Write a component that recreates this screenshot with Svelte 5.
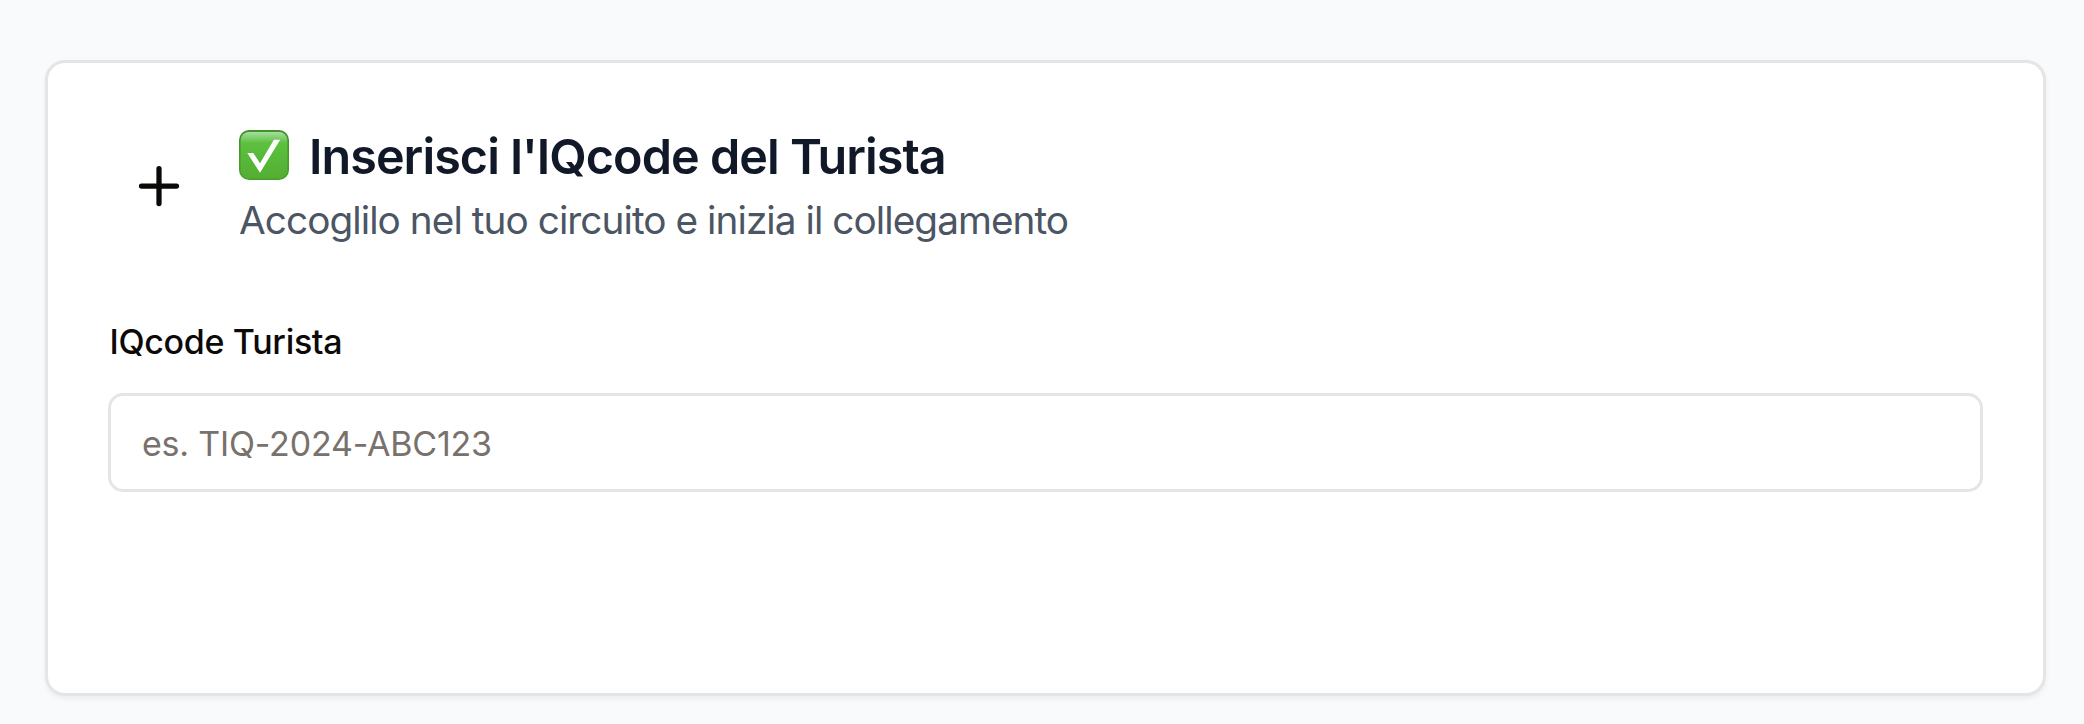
<script>
  let code = $state('');
</script>

<main class="page">
  <section class="card">
    <header class="header">
      <div class="icon">
        <svg viewBox="0 0 24 24" width="60" height="60" fill="none" stroke="currentColor" stroke-width="2.1" stroke-linecap="round" stroke-linejoin="round" aria-hidden="true">
          <path d="M5 12h14" />
          <path d="M12 5v14" />
        </svg>
      </div>
      <div class="heading">
        <h2 class="title">
          <svg class="check" viewBox="0 0 50 50" width="50" height="50" aria-hidden="true">
            <defs>
              <linearGradient id="face" x1="0" y1="0" x2="0" y2="1">
                <stop offset="0" stop-color="#a5dfa0" />
                <stop offset="0.1" stop-color="#87d177" />
                <stop offset="0.24" stop-color="#5cc03e" />
                <stop offset="1" stop-color="#54ae32" />
              </linearGradient>
              <linearGradient id="rim" x1="0" y1="0" x2="0" y2="1">
                <stop offset="0" stop-color="#43922c" />
                <stop offset="1" stop-color="#4a9e2d" />
              </linearGradient>
              <filter id="soft" x="-5%" y="-5%" width="110%" height="110%">
                <feGaussianBlur stdDeviation="0.7" />
              </filter>
            </defs>
            <rect width="50" height="50" rx="10" fill="url(#rim)" />
            <rect x="1.6" y="2" width="46.8" height="46.6" rx="8.4" fill="url(#face)" filter="url(#soft)" />
            <path d="M8.3 23h6L21 33.2 34.9 9.7h6.3L21 42.8z" fill="#fff" />
          </svg>
          <span>Inserisci l'IQcode del Turista</span>
        </h2>
        <p class="subtitle">Accoglilo nel tuo circuito e inizia il collegamento</p>
      </div>
    </header>
    <div class="field">
      <label for="iqcode">IQcode Turista</label>
      <input id="iqcode" type="text" placeholder="es. TIQ-2024-ABC123" bind:value={code} />
    </div>
  </section>
</main>

<style>
  :global(body) {
    margin: 0;
    background: #f9fafb;
  }
  .page {
    box-sizing: border-box;
    height: 724px;
    padding: 60px 38px 28px 45px;
    background: #f9fafc;
    font-family: Inter, 'Liberation Sans', sans-serif;
    color: #0c0a09;
  }
  .card {
    box-sizing: border-box;
    height: 636px;
    padding: 58px 60px;
    border: 3px solid #e5e5e5;
    border-radius: 20px;
    background: #fff;
    box-shadow: 0 2.5px 5px rgba(0, 0, 0, 0.05);
  }
  .header {
    display: flex;
    align-items: center;
    gap: 29px;
    height: 130px;
  }
  .icon {
    display: flex;
    padding: 0 21px;
  }
  .icon svg {
    display: block;
  }
  .heading {
    align-self: flex-start;
    padding-top: 1px;
  }
  .title {
    display: flex;
    align-items: center;
    gap: 20px;
    margin: 0;
    font-size: 48.5px;
    line-height: 70px;
    font-weight: 600;
    letter-spacing: -0.95px;
    color: #111827;
    white-space: nowrap;
  }
  .check {
    display: block;
    flex: none;
    margin-bottom: 4px;
  }
  .subtitle {
    margin: 0;
    font-size: 38.75px;
    line-height: 56px;
    letter-spacing: -0.95px;
    color: #4b5563;
    white-space: nowrap;
  }
  .field {
    display: flex;
    flex-direction: column;
    gap: 34px;
    margin-top: 73px;
  }
  label {
    align-self: flex-start;
    padding-left: 1.5px;
    font-size: 34px;
    line-height: 35px;
    font-weight: 500;
    letter-spacing: -0.32px;
  }
  input {
    box-sizing: border-box;
    width: 100%;
    height: 99px;
    padding: 2px 30px 0 31px;
    border: 3px solid #e5e5e5;
    border-radius: 15px;
    background: #fff;
    font: 400 34px Inter, 'Liberation Sans', sans-serif;
    letter-spacing: -0.2px;
    color: #0c0a09;
    outline: none;
  }
  input::placeholder {
    color: #78716c;
    opacity: 1;
  }
</style>
